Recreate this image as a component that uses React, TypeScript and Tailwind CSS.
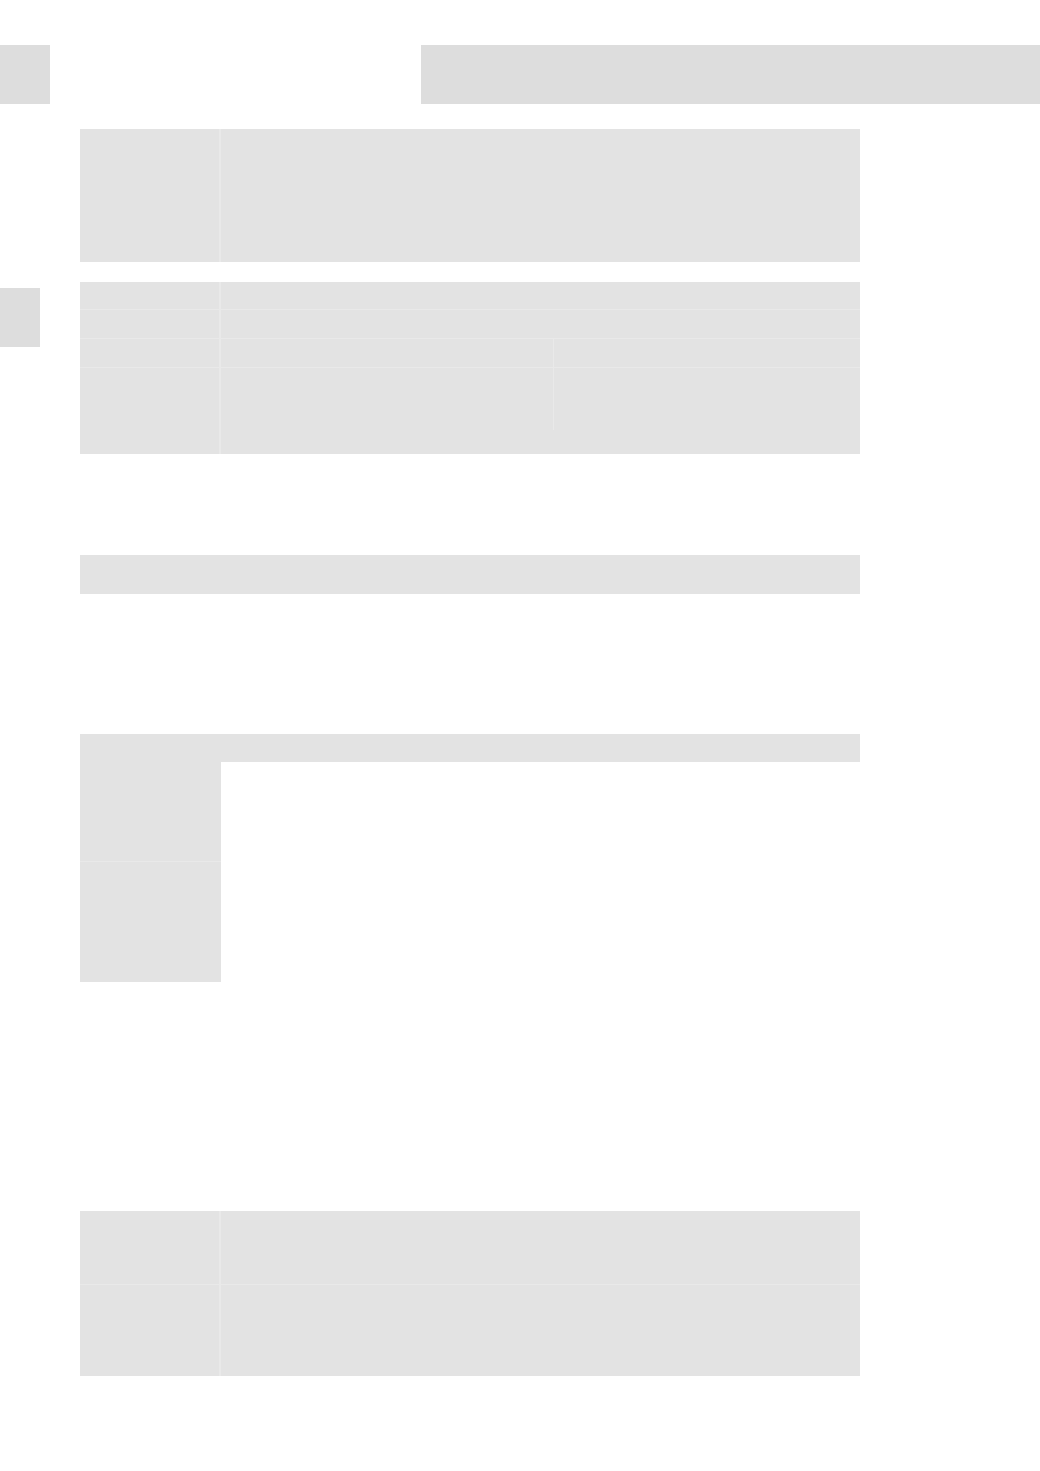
export default function App() {
  const cell = "bg-[#e3e3e3]"
  const line = "border-[#e9e9e9]"

  return (
    <div className="w-[1040px] h-[1471px] bg-white flex flex-col">
      {/* header */}
      <div className="mt-[45px] flex h-[59px]">
        <div className="w-[50px] bg-[#dddddd]" />
        <div className="ml-[371px] flex-1 bg-[#dddddd]" />
      </div>

      {/* first table */}
      <div className="mt-[25px] ml-[80px] w-[780px] h-[133px] flex">
        <div className={`w-[141px] ${cell} border-r-2 ${line}`} />
        <div className={`flex-1 ${cell}`} />
      </div>

      {/* second table with side tab */}
      <div className="mt-[20px] flex">
        <div className="w-[80px]">
          <div className="mt-[6px] w-[40px] h-[59px] bg-[#dddddd]" />
        </div>
        <div className="w-[780px] flex flex-col">
          <div className={`h-[28px] flex border-b ${line}`}>
            <div className={`w-[141px] ${cell} border-r-2 ${line}`} />
            <div className={`flex-1 ${cell}`} />
          </div>
          <div className={`h-[29px] flex border-b ${line}`}>
            <div className={`w-[141px] ${cell} border-r-2 ${line}`} />
            <div className={`flex-1 ${cell}`} />
          </div>
          <div className={`h-[29px] flex border-b ${line}`}>
            <div className={`w-[141px] ${cell} border-r-2 ${line}`} />
            <div className={`w-[333px] ${cell} border-r ${line}`} />
            <div className={`flex-1 ${cell}`} />
          </div>
          <div className={`h-[86px] flex ${cell}`}>
            <div className={`w-[141px] border-r-2 ${line}`} />
            <div className={`w-[333px] h-[62px] border-r ${line}`} />
            <div className="flex-1" />
          </div>
        </div>
      </div>

      {/* single bar */}
      <div className={`mt-[101px] ml-[80px] w-[780px] h-[39px] ${cell}`} />

      {/* header bar with label column */}
      <div className={`mt-[140px] ml-[80px] w-[780px] h-[28px] ${cell}`} />
      <div className="ml-[80px] w-[141px] flex flex-col">
        <div className={`h-[100px] ${cell} border-b ${line}`} />
        <div className={`h-[120px] ${cell}`} />
      </div>

      {/* last table */}
      <div className="mt-[229px] ml-[80px] w-[780px] flex flex-col">
        <div className={`h-[74px] flex border-b ${line}`}>
          <div className={`w-[141px] ${cell} border-r-2 ${line}`} />
          <div className={`flex-1 ${cell}`} />
        </div>
        <div className="h-[91px] flex">
          <div className={`w-[141px] ${cell} border-r-2 ${line}`} />
          <div className={`flex-1 ${cell}`} />
        </div>
      </div>
    </div>
  )
}
